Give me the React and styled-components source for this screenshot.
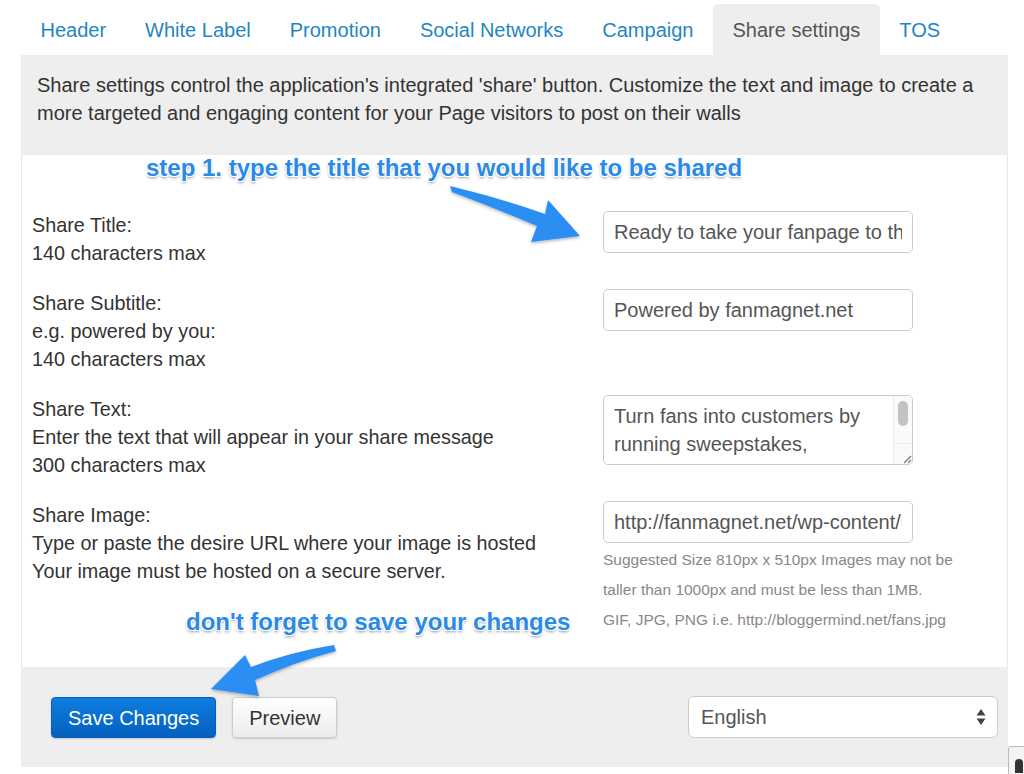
import React from 'react';
import styled, { createGlobalStyle } from 'styled-components';

const GlobalStyle = createGlobalStyle`
  body {
    margin: 0;
    background: #fff;
    font-family: "Liberation Sans", Arial, sans-serif;
    color: #333;
  }
`;

const Page = styled.div`
  position: relative;
  width: 1024px;
  height: 774px;
  overflow: hidden;
`;

const Panel = styled.div`
  margin-left: 21px;
  width: 987px;
`;

const TabBar = styled.div`
  display: flex;
  padding-top: 4px;
  height: 51px;
`;

const Tab = styled.div`
  padding: 0 19.5px;
  height: 51px;
  line-height: 52px;
  font-size: 20px;
  color: ${props => (props.active ? '#555' : '#1f86c2')};
  background: ${props => (props.active ? '#eee' : 'transparent')};
  border-radius: 5px 5px 0 0;
`;

const Description = styled.div`
  background: #eee;
  padding: 16px 16px 28px;
  font-size: 20px;
  line-height: 28px;
`;

const FormArea = styled.div`
  position: relative;
  background: #fff;
  border-left: 1px solid #e6e6e6;
  border-right: 1px solid #e6e6e6;
  padding: 56px 0 32px 10px;
  display: flex;
  flex-direction: column;
  gap: 22px;
`;

const Row = styled.div`
  display: grid;
  grid-template-columns: 571px 1fr;
`;

const Label = styled.div`
  font-size: 19.8px;
  line-height: 28px;
  color: #333;
`;

const Field = styled.div`
  display: flex;
  flex-direction: column;
`;

const TextInput = styled.input`
  box-sizing: border-box;
  width: 310px;
  height: 42px;
  margin: 0;
  border: 1px solid #ccc;
  border-radius: 5px;
  padding: 0 10px;
  font-family: "Liberation Sans", Arial, sans-serif;
  font-size: 20px;
  color: #555;
  background: #fff;
  outline: none;
`;

const TextArea = styled.div`
  box-sizing: border-box;
  width: 310px;
  height: 70px;
  border: 1px solid #ccc;
  border-radius: 5px;
  display: flex;
  overflow: hidden;
`;

const AreaText = styled.div`
  flex: 1;
  padding: 6px 10px;
  font-size: 20px;
  line-height: 28px;
  color: #555;
`;

const ScrollTrack = styled.div`
  width: 18px;
  border-left: 1px solid #ececec;
  background: #fafafa;
  display: flex;
  flex-direction: column;
  align-items: center;
`;

const ScrollThumb = styled.div`
  margin-top: 5px;
  width: 10px;
  height: 25px;
  border-radius: 5px;
  background: #c3c3c3;
`;

const Grip = styled.div`
  margin-top: auto;
  width: 18px;
  height: 20px;
  border-top: 1px solid #ececec;
  display: flex;
  align-items: flex-end;
  justify-content: flex-end;
`;

const Help = styled.div`
  margin-top: 2px;
  font-size: 15.5px;
  line-height: 30px;
  color: #888;
  white-space: nowrap;
`;

const Footer = styled.div`
  background: #eee;
  padding: 29px 10px 29px 30px;
  display: flex;
  align-items: center;
`;

const Button = styled.div`
  box-sizing: border-box;
  height: 41px;
  padding: 0 16px;
  margin-right: 16px;
  border-radius: 4px;
  font-size: 20px;
  line-height: 40px;
  color: ${props => (props.primary ? '#fff' : '#333')};
  border: 1px solid ${props => (props.primary ? '#0a5db8' : '#ccc')};
  background: ${props => (props.primary
    ? 'linear-gradient(#0d7ee0, #0560bf)'
    : 'linear-gradient(#fff, #ececec)')};
  box-shadow: 0 1px 2px rgba(0, 0, 0, 0.15);
`;

const Select = styled.div`
  box-sizing: border-box;
  margin-left: auto;
  width: 310px;
  height: 42px;
  border: 1px solid #ccc;
  border-radius: 6px;
  background: #fff;
  padding: 0 10px 0 12px;
  display: flex;
  align-items: center;
  justify-content: space-between;
  font-size: 20px;
  color: #555;
`;

const Note = styled.div`
  position: absolute;
  left: ${props => props.x}px;
  top: ${props => props.y}px;
  font-size: 24px;
  font-weight: bold;
  color: #2b8ae6;
  white-space: nowrap;
  text-shadow: 1px 1px 0 #fff, -1px -1px 0 #fff, 1px -1px 0 #fff, -1px 1px 0 #fff,
    0 2px 3px rgba(0, 0, 0, 0.45);
`;

const Overlay = styled.svg`
  position: absolute;
  left: 0;
  top: 0;
  pointer-events: none;
`;

const Widget = styled.div`
  position: absolute;
  left: 1008px;
  top: 746px;
  width: 30px;
  height: 40px;
  border: 1px solid #bbb;
  border-radius: 3px;
  background: #f4f4f4;
`;

const WidgetGlyph = styled.div`
  margin: 12px 0 0 6px;
  width: 8px;
  height: 14px;
  border-radius: 4px 4px 0 0;
  background: #333;
`;

const tabs = ['Header', 'White Label', 'Promotion', 'Social Networks', 'Campaign', 'Share settings', 'TOS'];

export default function App() {
  return (
    <Page>
      <GlobalStyle />
      <Panel>
        <TabBar>
          {tabs.map(name => (
            <Tab key={name} active={name === 'Share settings'}>{name}</Tab>
          ))}
        </TabBar>
        <Description>
          Share settings control the application's integrated 'share' button. Customize the text and image to create a
          <br />
          more targeted and engaging content for your Page visitors to post on their walls
        </Description>
        <FormArea>
          <Row>
            <Label>Share Title:<br />140 characters max</Label>
            <Field>
              <TextInput readOnly defaultValue="Ready to take your fanpage to the next level?" />
            </Field>
          </Row>
          <Row>
            <Label>Share Subtitle:<br />e.g. powered by you:<br />140 characters max</Label>
            <Field>
              <TextInput readOnly defaultValue="Powered by fanmagnet.net" />
            </Field>
          </Row>
          <Row>
            <Label>Share Text:<br />Enter the text that will appear in your share message<br />300 characters max</Label>
            <Field>
              <TextArea>
                <AreaText>Turn fans into customers by running sweepstakes,</AreaText>
                <ScrollTrack>
                  <ScrollThumb />
                  <Grip>
                    <svg width="10" height="10" viewBox="0 0 10 10">
                      <path d="M2 9 L9 2 M6 9 L9 6" stroke="#777" strokeWidth="1.2" />
                    </svg>
                  </Grip>
                </ScrollTrack>
              </TextArea>
            </Field>
          </Row>
          <Row>
            <Label>Share Image:<br />Type or paste the desire URL where your image is hosted<br />Your image must be hosted on a secure server.</Label>
            <Field>
              <TextInput readOnly defaultValue="http://fanmagnet.net/wp-content/uploads/share.jpg" />
              <Help>
                Suggested Size 810px x 510px Images may not be<br />
                taller than 1000px and must be less than 1MB.<br />
                GIF, JPG, PNG i.e. http://bloggermind.net/fans.jpg
              </Help>
            </Field>
          </Row>
        </FormArea>
        <Footer>
          <Button primary>Save Changes</Button>
          <Button>Preview</Button>
          <Select>
            English
            <svg width="12" height="20" viewBox="0 0 12 20">
              <path d="M6 2 L10.5 8.5 L1.5 8.5 Z M6 18 L10.5 11.5 L1.5 11.5 Z" fill="#444" />
            </svg>
          </Select>
        </Footer>
      </Panel>

      <Note x={146} y={154}>step 1. type the title that you would like to be shared</Note>
      <Note x={186} y={608}>don't forget to save your changes</Note>

      <Overlay width="1024" height="774" viewBox="0 0 1024 774">
        <defs>
          <filter id="shadow" x="-10%" y="-10%" width="130%" height="140%">
            <feDropShadow dx="0" dy="1.5" stdDeviation="1.5" floodColor="#000" floodOpacity="0.3" />
          </filter>
        </defs>
        <path
          d="M450 186 Q500 198 545 214 L548 200 L580 236 L531 242 L537 226 Q495 208 452 192 Z"
          fill="#2b8ef2"
          filter="url(#shadow)"
        />
        <path
          d="M334 645 Q290 652 251 667 L245 655 L211 689 L259 696 L255 680 Q295 662 336 651 Z"
          fill="#2b8ef2"
          filter="url(#shadow)"
        />
      </Overlay>
      <Widget><WidgetGlyph /></Widget>
    </Page>
  );
}
